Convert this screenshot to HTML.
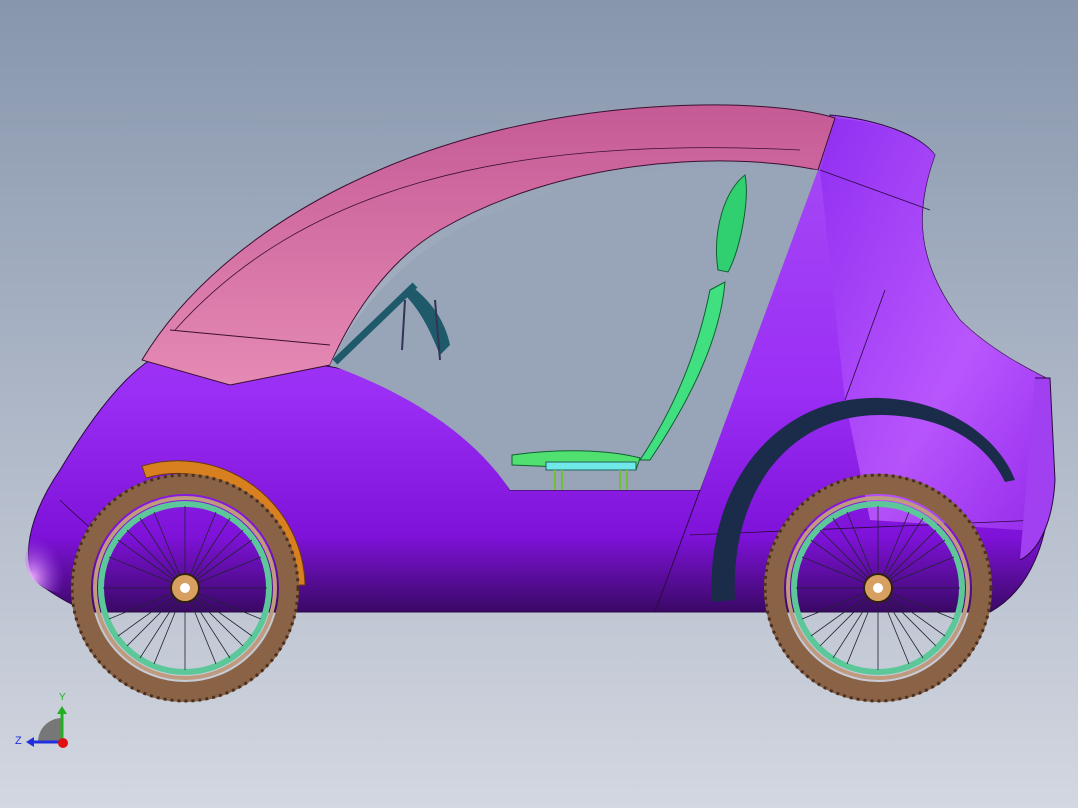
<!DOCTYPE html>
<html><head><meta charset="utf-8"><style>
html,body{margin:0;padding:0;width:1078px;height:808px;overflow:hidden}
body{background:linear-gradient(#8796ad 0%,#a9b3c4 45%,#d3d7e0 100%)}
svg{position:absolute;left:0;top:0}
</style></head><body>
<svg width="1078" height="808" viewBox="0 0 1078 808">
<defs>
<linearGradient id="body" x1="0" y1="0" x2="0" y2="1">
<stop offset="0" stop-color="#a64cf5"/><stop offset="0.55" stop-color="#9b2ff5"/><stop offset="0.85" stop-color="#7e12d8"/><stop offset="1" stop-color="#3a0866"/></linearGradient>
<linearGradient id="pink" x1="0" y1="0" x2="0" y2="1">
<stop offset="0" stop-color="#c55a96"/><stop offset="1" stop-color="#e58ab4"/></linearGradient>
<linearGradient id="rear" x1="0" y1="0" x2="1" y2="1">
<stop offset="0" stop-color="#8a28f0"/><stop offset="0.6" stop-color="#c060ff"/><stop offset="1" stop-color="#9a30f0"/></linearGradient>
<radialGradient id="nose" cx="0.1" cy="0.8" r="0.5"><stop offset="0" stop-color="#f0b0ff"/><stop offset="1" stop-color="#a040f5" stop-opacity="0"/></radialGradient>
</defs>
<!-- main body -->
<path d="M45,588 C20,575 22,525 60,470 C90,420 120,380 150,360 L320,365 C420,380 470,420 510,490 L700,490 L830,115 C880,120 920,135 935,155 C915,210 915,260 960,320 C990,350 1030,370 1050,380 L1050,480 C1050,540 1030,590 990,612 L90,612 C70,605 55,595 45,588 Z" fill="url(#body)" stroke="#2a0a40" stroke-width="1"/>
<path d="M25,560 C30,520 60,500 90,520 L80,595 C50,595 28,585 25,560Z" fill="url(#nose)"/>
<!-- rear panel lighter -->
<path d="M820,170 L835,118 C880,122 920,135 935,155 C915,210 915,260 960,320 C990,350 1030,370 1050,380 L1050,480 C1045,520 1030,530 1020,530 L870,520 L845,400 Z" fill="url(#rear)" opacity="0.8"/>
<!-- canopy pink -->
<path d="M142,360 C220,230 420,110 700,105 C760,104 810,110 835,118 L818,170 C720,150 560,160 440,230 C380,265 345,330 330,365 L230,385 Z" fill="url(#pink)" stroke="#3a1030" stroke-width="1"/>
<path d="M170,330 L330,345" stroke="#3a1030" stroke-width="1" fill="none"/>
<path d="M175,330 C300,190 500,135 800,150" stroke="#3a1030" stroke-width="0.8" fill="none"/>
<!-- window opening -->
<path d="M330,365 C360,300 420,240 500,210 C600,170 720,160 818,170 L700,490 L510,490 C470,430 400,390 330,365 Z" fill="#98a4b8"/>
<!-- lines -->
<path d="M700,490 L655,612" stroke="#2a0a40" stroke-width="1"/>
<path d="M820,170 L930,210" stroke="#2a0a40" stroke-width="0.8"/>
<path d="M885,290 L845,400" stroke="#2a0a40" stroke-width="0.8"/>
<path d="M690,535 L1040,520" stroke="#2a0a40" stroke-width="0.8"/>
<path d="M60,500 C80,520 95,530 100,540" stroke="#2a0a40" stroke-width="0.8" fill="none"/>
<path d="M1035,378 L1050,378 L1055,480 C1053,520 1040,550 1020,560" stroke="#2a0a40" stroke-width="1" fill="#a040f0"/>
<!-- rear fender arc -->
<path d="M712,602 C705,480 780,395 880,398 C950,400 1000,440 1015,480 L1005,482 C985,440 940,415 880,415 C790,415 730,490 735,600 Z" fill="#1b2c4a"/>
<!-- front fender -->
<path d="M142,466 A127,127 0 0 1 305,585 L292,585 A114,114 0 0 0 146,478 Z" fill="#d88020" stroke="#6a3a10" stroke-width="1"/>
<!-- steering -->
<path d="M335,362 L415,285" stroke="#1f5a6a" stroke-width="7"/>
<path d="M410,285 C430,300 445,320 450,345 L440,355 C430,330 420,310 405,295Z" fill="#1f5a6a"/>
<path d="M405,300 L402,350 M435,300 L440,360" stroke="#335" stroke-width="2"/>
<!-- seat -->
<path d="M718,270 C712,230 725,190 745,175 C750,200 740,250 728,272 Z" fill="#30d070" stroke="#106030"/>
<path d="M710,290 L725,282 C720,340 690,400 650,460 L640,460 C680,400 700,340 710,290Z" fill="#40e080" stroke="#106030"/>
<path d="M512,455 C560,448 610,450 640,458 L636,470 L512,465Z" fill="#50e070" stroke="#106030"/>
<rect x="546" y="462" width="90" height="8" fill="#70e8e8" stroke="#206060"/>
<path d="M555,470 L555,490 M562,470 L562,490 M620,470 L620,490 M627,470 L627,490" stroke="#70c030" stroke-width="2"/>
<!-- wheels -->
<g id="w">
<circle cx="185" cy="588" r="104" fill="none" stroke="#8a6246" stroke-width="20"/>
<circle cx="185" cy="588" r="113" fill="none" stroke="#4a3020" stroke-width="3" stroke-dasharray="3 4"/>
<circle cx="185" cy="588" r="90" fill="none" stroke="#bf9a7e" stroke-width="4"/>
<circle cx="185" cy="588" r="84" fill="none" stroke="#5cc89a" stroke-width="6"/>
<g stroke="#223" stroke-width="0.8">
<path d="M185,506 L185,670 M103,588 L267,588 M127,530 L243,646 M243,530 L127,646 M154,512 L216,664 M216,512 L154,664 M109,557 L261,619 M109,619 L261,557 M140,518 L230,658 M230,518 L140,658 M118,540 L252,636 M118,636 L252,540"/>
</g>
<circle cx="185" cy="588" r="14" fill="#d8a060" stroke="#302010" stroke-width="2"/>
<circle cx="185" cy="588" r="5" fill="#fff"/>
</g>
<use href="#w" transform="translate(693,0)"/>
<!-- axis triad -->
<path d="M38,742 A24,24 0 0 1 62,718 L62,742Z" fill="#777"/>
<path d="M62,742 L62,710" stroke="#20b020" stroke-width="3"/>
<path d="M57,714 L62,706 L67,714Z" fill="#20b020"/>
<path d="M62,742 L32,742" stroke="#2030e0" stroke-width="3"/>
<path d="M34,737 L26,742 L34,747Z" fill="#2030e0"/>
<circle cx="63" cy="743" r="5" fill="#e01010"/>
<text x="59" y="700" font-family="Liberation Sans,sans-serif" font-size="10" fill="#20b020">Y</text>
<text x="15" y="744" font-family="Liberation Sans,sans-serif" font-size="11" fill="#2030e0">Z</text>
</svg>
</body></html>
